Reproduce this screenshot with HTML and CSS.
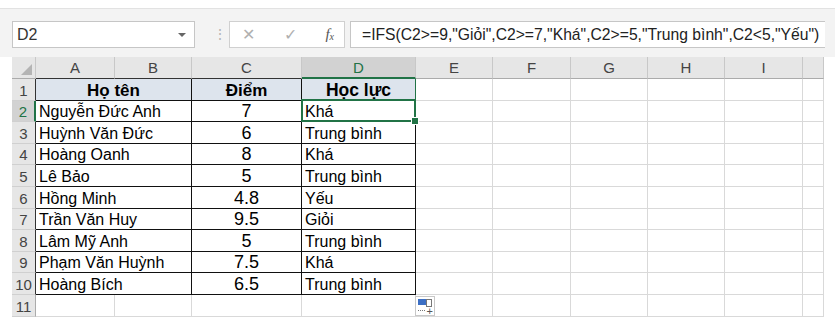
FILE: index.html
```html
<!DOCTYPE html>
<html lang="vi">
<head>
    <meta charset="UTF-8">
    <title>Xếp loại học lực</title>
    <link rel="stylesheet" href="styles.css">
</head>
<body>
    <div class="app">
        <div class="formula-bar">
            <div class="name-box">
                <span>D2</span>
                <span class="caret"></span>
            </div>
            <div class="grip">⋮</div>
            <div class="fx-buttons">
                <span class="fx-btn">✕</span>
                <span class="fx-btn">✓</span>
                <span class="fx-btn fx">f<sub>x</sub></span>
            </div>
            <div class="formula">=IFS(C2&gt;=9,"Giỏi",C2&gt;=7,"Khá",C2&gt;=5,"Trung bình",C2&lt;5,"Yếu")</div>
        </div>

        <div class="sheet">
            <table class="grid">
                <colgroup>
                    <col class="w-rh"><col class="w-a"><col class="w-b"><col class="w-c"><col class="w-d">
                    <col class="w-e"><col class="w-f"><col class="w-g"><col class="w-h"><col class="w-i"><col class="w-j">
                </colgroup>
                <tr class="col-heads">
                    <th class="corner"><span class="tri"></span></th>
                    <th class="top">A</th><th class="top">B</th><th class="top">C</th><th class="top active">D</th>
                    <th>E</th><th>F</th><th>G</th><th>H</th><th>I</th><th></th>
                </tr>
                <tr>
                    <th class="rh in">1</th>
                    <td colspan="2" class="d title center">Họ tên</td>
                    <td class="d title center">Điểm</td>
                    <td class="d title center d1">Học lực</td>
                    <td></td><td></td><td></td><td></td><td></td><td></td>
                </tr>
                <tr>
                    <th class="rh in active">2</th>
                    <td colspan="2" class="d">Nguyễn Đức Anh</td>
                    <td class="d num">7</td>
                    <td class="d sel-cell">Khá<span class="sel"><span class="handle"></span></span></td>
                    <td></td><td></td><td></td><td></td><td></td><td></td>
                </tr>
                <tr>
                    <th class="rh in">3</th>
                    <td colspan="2" class="d">Huỳnh Văn Đức</td>
                    <td class="d num">6</td>
                    <td class="d">Trung bình</td>
                    <td></td><td></td><td></td><td></td><td></td><td></td>
                </tr>
                <tr>
                    <th class="rh in">4</th>
                    <td colspan="2" class="d">Hoàng Oanh</td>
                    <td class="d num">8</td>
                    <td class="d">Khá</td>
                    <td></td><td></td><td></td><td></td><td></td><td></td>
                </tr>
                <tr>
                    <th class="rh in">5</th>
                    <td colspan="2" class="d">Lê Bảo</td>
                    <td class="d num">5</td>
                    <td class="d">Trung bình</td>
                    <td></td><td></td><td></td><td></td><td></td><td></td>
                </tr>
                <tr>
                    <th class="rh in">6</th>
                    <td colspan="2" class="d">Hồng Minh</td>
                    <td class="d num">4.8</td>
                    <td class="d">Yếu</td>
                    <td></td><td></td><td></td><td></td><td></td><td></td>
                </tr>
                <tr>
                    <th class="rh in">7</th>
                    <td colspan="2" class="d">Trần Văn Huy</td>
                    <td class="d num">9.5</td>
                    <td class="d">Giỏi</td>
                    <td></td><td></td><td></td><td></td><td></td><td></td>
                </tr>
                <tr>
                    <th class="rh in">8</th>
                    <td colspan="2" class="d">Lâm Mỹ Anh</td>
                    <td class="d num">5</td>
                    <td class="d">Trung bình</td>
                    <td></td><td></td><td></td><td></td><td></td><td></td>
                </tr>
                <tr>
                    <th class="rh in">9</th>
                    <td colspan="2" class="d">Phạm Văn Huỳnh</td>
                    <td class="d num">7.5</td>
                    <td class="d">Khá</td>
                    <td></td><td></td><td></td><td></td><td></td><td></td>
                </tr>
                <tr>
                    <th class="rh in">10</th>
                    <td colspan="2" class="d">Hoàng Bích</td>
                    <td class="d num">6.5</td>
                    <td class="d">Trung bình</td>
                    <td></td><td></td><td></td><td></td><td></td><td></td>
                </tr>
                <tr>
                    <th class="rh">11</th>
                    <td></td><td></td><td></td><td class="paste-cell"><span class="paste-icon"><span class="pi-blue"></span><span class="pi-box"></span><span class="pi-dots"></span><span class="pi-plus">+</span></span></td>
                    <td></td><td></td><td></td><td></td><td></td><td></td><td></td>
                </tr>
            </table>
        </div>
    </div>
</body>
</html>
```

FILE: styles.css
```css
body {
    margin: 0;
    background: #fff;
    font-family: 'Liberation Sans', Arial, sans-serif;
    color: #000;
}
.app {
    width: 835px;
    height: 329px;
    padding-top: 8px;
    box-sizing: border-box;
}

/* formula bar */
.formula-bar {
    height: 49px;
    box-sizing: border-box;
    background: #f3f3f3;
    border-top: 1px solid #e2e2e2;
    display: flex;
    align-items: flex-start;
    padding: 12px 0 0 12px;
}
.name-box {
    width: 183px;
    height: 27px;
    box-sizing: border-box;
    background: #fff;
    border: 1px solid #c6c6c6;
    display: flex;
    align-items: center;
    justify-content: space-between;
    padding: 0 8px 0 4px;
    font-size: 16px;
    color: #333;
}
.caret {
    width: 0;
    height: 0;
    border-left: 4px solid transparent;
    border-right: 4px solid transparent;
    border-top: 4px solid #666;
}
.grip {
    width: 34px;
    box-sizing: border-box;
    text-align: right;
    padding-right: 2px;
    color: #b5b5b5;
    font-size: 14px;
    line-height: 27px;
}
.fx-buttons {
    width: 116px;
    height: 27px;
    box-sizing: border-box;
    background: #fff;
    border: 1px solid #d0d0d0;
    display: flex;
    align-items: center;
    justify-content: space-between;
    padding: 0 10px 0 12px;
    color: #b0b0b0;
    font-size: 16px;
}
.fx {
    font-family: 'Liberation Serif', serif;
    font-style: italic;
    color: #555;
    font-size: 15px;
}
.fx sub {
    font-size: 10px;
    vertical-align: -1px;
}
.formula {
    margin-left: 5px;
    width: 475px;
    height: 27px;
    box-sizing: border-box;
    background: #fff;
    border: 1px solid #c6c6c6;
    border-right: none;
    padding-left: 11px;
    font-size: 15.7px;
    line-height: 25px;
    color: #222;
    white-space: nowrap;
    overflow: hidden;
}

/* sheet */
.sheet {
    padding-left: 12px;
}
.grid {
    border-collapse: separate;
    border-spacing: 0;
    table-layout: fixed;
    width: 812px;
}
.w-rh { width: 24px; }
.w-a { width: 79px; }
.w-b { width: 77px; }
.w-c { width: 110px; }
.w-d { width: 114px; }
.w-e { width: 77px; }
.w-f { width: 78px; }
.w-g { width: 77px; }
.w-h { width: 77px; }
.w-i { width: 78px; }
.w-j { width: 21px; }

.grid tr { height: 21.6px; }
.grid tr.col-heads { height: 22px; }
.grid td,
.grid th {
    padding: 0 3px;
    border-right: 1px solid #d9d9d9;
    border-bottom: 1px solid #d9d9d9;
    white-space: nowrap;
    overflow: hidden;
    font-size: 16px;
    line-height: 19px;
    vertical-align: bottom;
    box-sizing: border-box;
}
.col-heads th {
    background: #e6e6e6;
    font-weight: normal;
    color: #444;
    font-size: 15px;
    border-right: 1px solid #c8c8c8;
    border-bottom: 1px solid #ababab;
    vertical-align: middle;
}
.col-heads th.top {
    border-bottom-color: #333;
}
.col-heads th.active {
    background: #d2d2d2;
    color: #217346;
    border-bottom: 2px solid #217346;
}
.corner {
    position: relative;
}
.tri {
    position: absolute;
    right: 3px;
    bottom: 3px;
    width: 0;
    height: 0;
    border-left: 11px solid transparent;
    border-bottom: 11px solid #b4b4b4;
}
.grid th.rh {
    background: #e6e6e6;
    font-weight: normal;
    color: #444;
    font-size: 15px;
    text-align: center;
    padding: 0;
    border-right: 1px solid #ababab;
    border-bottom: 1px solid #d0d0d0;
}
.grid th.rh.in {
    border-right-color: #333;
}
.grid th.rh.active {
    background: #d2d2d2;
    color: #217346;
    border-right: 2px solid #217346;
}

.grid td.d {
    border-right: 1px solid #111;
    border-bottom: 1px solid #111;
}
.grid td.title {
    background: #dde4ed;
    font-weight: bold;
    font-size: 17px;
}
.grid td.d1 {
    border-right-color: #217346;
    font-size: 17.5px;
}
.center { text-align: center; }
.grid td.num {
    text-align: center;
    font-size: 18px;
}

.sel-cell {
    position: relative;
    overflow: visible !important;
}
.sel {
    position: absolute;
    top: -2px;
    left: -1px;
    right: -1px;
    bottom: -1px;
    border: 2px solid #217346;
}
.handle {
    position: absolute;
    right: -5px;
    bottom: -5px;
    width: 6px;
    height: 6px;
    background: #217346;
    border: 1px solid #fff;
}

.paste-cell {
    position: relative;
    overflow: visible !important;
}
.paste-icon {
    position: absolute;
    left: 113px;
    top: 1px;
    width: 20px;
    height: 20px;
    box-sizing: border-box;
    background: #fff;
    border: 1px solid #c8c8c8;
}
.pi-blue {
    position: absolute;
    left: 2px;
    top: 2px;
    width: 8px;
    height: 6px;
    background: #3c6fc4;
}
.pi-box {
    position: absolute;
    left: 10px;
    top: 2px;
    width: 4px;
    height: 6px;
    border: 1px solid #777;
}
.pi-dots {
    position: absolute;
    left: 2px;
    top: 13px;
    width: 7px;
    border-top: 1px dotted #777;
}
.pi-plus {
    position: absolute;
    right: 1px;
    bottom: -2px;
    font-size: 11px;
    line-height: 11px;
    color: #555;
}
```
